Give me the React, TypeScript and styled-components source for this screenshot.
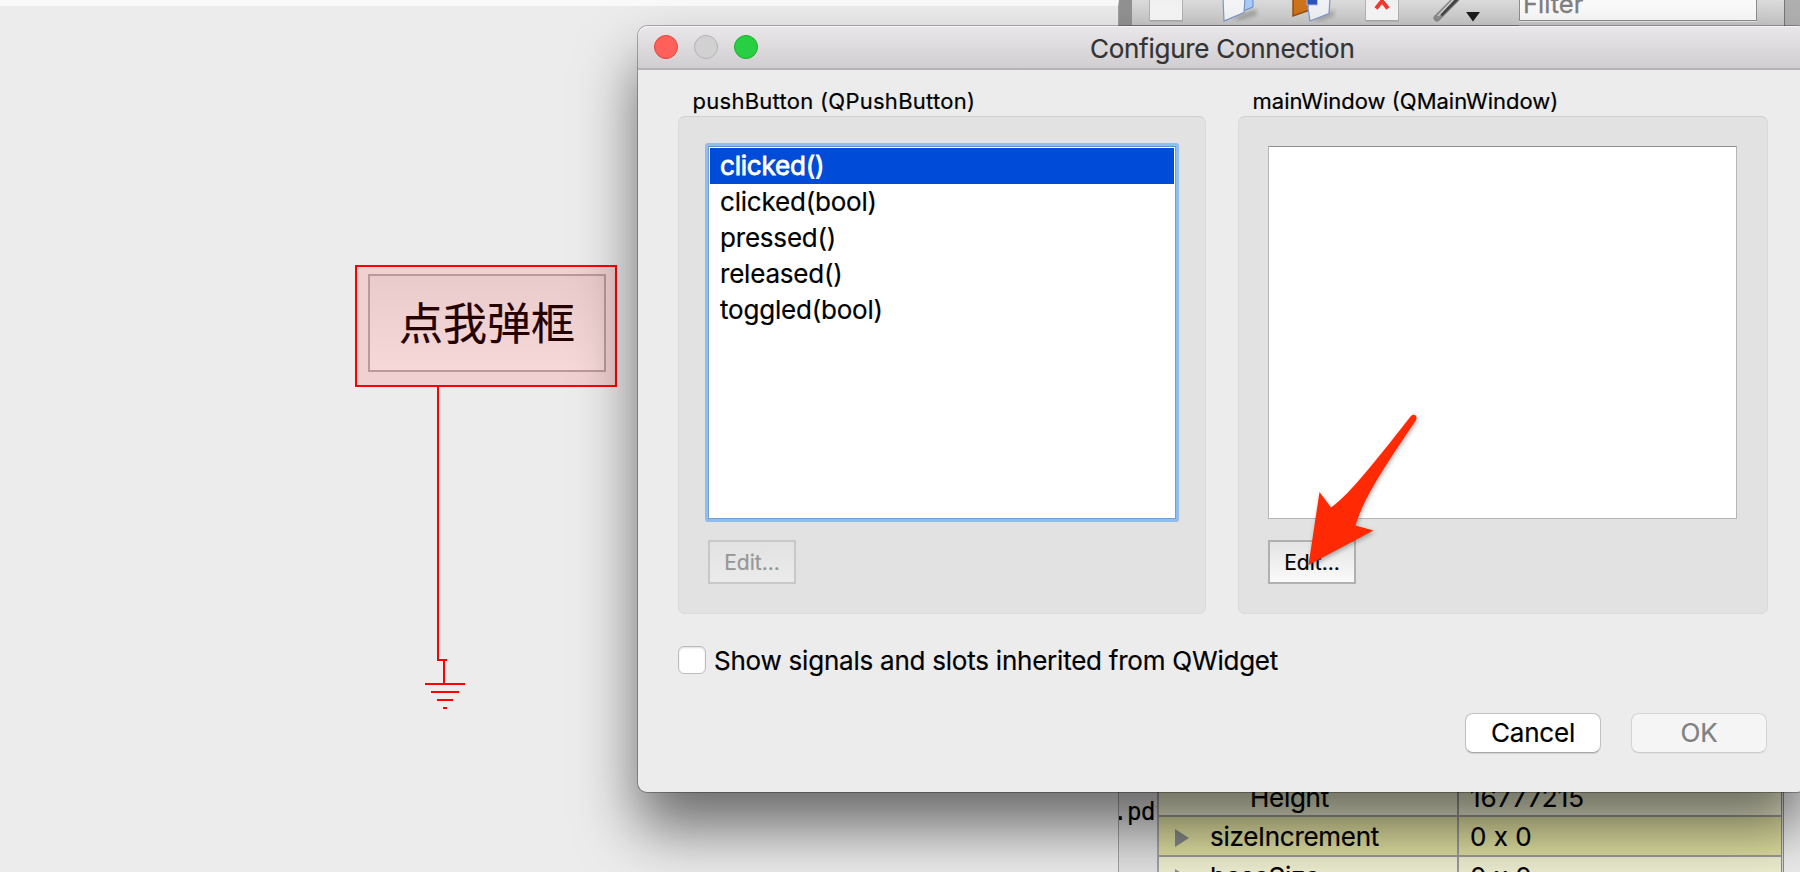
import React from 'react';
import styled, { createGlobalStyle } from 'styled-components';

const Global = createGlobalStyle`
  body { margin: 0; overflow: hidden; }
  * { box-sizing: border-box; }
`;

const Desktop = styled.div`
  position: relative;
  display: flex;
  width: 1800px;
  height: 872px;
  overflow: hidden;
  background: linear-gradient(#b0b0b0 40px, #ececec 700px);
  font-family: Inter, "Noto Sans CJK SC", sans-serif;
  color: #000;
  -webkit-text-stroke: 0.2px currentColor;
`;

const Canvas = styled.div`
  position: relative;
  width: 1119px;
  height: 872px;
  background: #ececec;
  border-top: 6px solid #fafafa;
  border-right: 1px solid #a0a0a0;
`;

const ConnectedButton = styled.div`
  position: absolute;
  left: 355px;
  top: 259px;
  width: 262px;
  height: 122px;
  padding: 7px 10px 12px 11px;
  border: 2px solid #ff0000;
  background: #f0d0d0;
`;

const PushButton = styled.div`
  display: flex;
  align-items: center;
  justify-content: center;
  width: 238px;
  height: 98px;
  padding-bottom: 5px;
  border: 2px solid #bc9a9a;
  background: linear-gradient(#eacbcb, #f6d8d8);
  font: 44px/64px "Noto Sans CJK SC", sans-serif;
  color: #240000;
`;

const Wire = styled.svg`
  position: absolute;
  left: 420px;
  top: 380px;
`;

const Behind = styled.div`
  display: flex;
  flex-direction: column;
  justify-content: space-between;
  width: 681px;
  height: 872px;
`;

const Toolbar = styled.div`
  display: flex;
  width: 666px;
  height: 30px;
  background: linear-gradient(#dcdcdc, #c8c8c8 24px);
  border-left: 13px solid #929292;
  border-right: 1px solid #777;
`;

const ToolIcons = styled.svg`
  flex: none;
  width: 387px;
  height: 30px;
`;

const Filter = styled.div`
  width: 238px;
  height: 21px;
  padding-left: 3px;
  overflow: hidden;
  border: 1px solid #8e8e8e;
  border-top: 0;
  background: #fbfbfb;
  box-shadow: 0 1px #e6e6e6;
  color: #808080;
  font-size: 25.5px;
  line-height: 7px;
  -webkit-text-stroke: 0.3px #808080;
`;

const Properties = styled.div`
  display: flex;
  height: 94px;
`;

const FileName = styled.div`
  width: 40px;
  padding-top: 16px;
  overflow: hidden;
  border-right: 2px solid #a2a2a2;
  background: #e2e2e2;
  font: 24px/36px "DejaVu Sans Mono", monospace;
  letter-spacing: -0.5px;
  text-indent: -6px;
`;

const Table = styled.div`
  width: 625px;
  border-right: 3px double #8c8c8c;
  background: #d8d8d8;
`;

const Row = styled.div<{ $bg: string; $h: number }>`
  display: flex;
  height: ${p => p.$h}px;
  overflow: hidden;
  background: ${p => p.$bg};
  border-bottom: 2px solid #9a9a9a;
  font-size: 26px;
  line-height: 40px;
`;

const Key = styled.div<{ $indent: number }>`
  position: relative;
  flex: none;
  width: 300px;
  padding-left: ${p => p.$indent}px;
  border-right: 2px solid #9a9a9a;
  letter-spacing: -0.28px;
`;

const Value = styled.div`
  padding-left: 11px;
`;

const Expander = styled.svg`
  position: absolute;
  left: 16px;
  top: 11px;
`;

const Dialog = styled.div`
  position: absolute;
  left: 638px;
  top: 26px;
  width: 1168px;
  height: 766px;
  border-radius: 10px 10px 9px 9px;
  background: #ececec;
  box-shadow: 0 0 0 1px rgba(0, 0, 0, 0.28), 0 36px 60px rgba(0, 0, 0, 0.55);
`;

const TitleBar = styled.div`
  display: flex;
  align-items: center;
  height: 44px;
  padding-left: 16px;
  gap: 16px;
  border-radius: 10px 10px 0 0;
  border-bottom: 2px solid #b5b3b5;
  background: linear-gradient(#e9e7e9, #d1ced1);
  box-shadow: inset 0 1px #f6f6f6;
`;

const Light = styled.span<{ $fill: string; $edge: string }>`
  width: 24px;
  height: 24px;
  border: 1px solid ${p => p.$edge};
  border-radius: 50%;
  background: ${p => p.$fill};
`;

const Title = styled.span`
  margin-left: 316px;
  padding-top: 3px;
  color: #333;
  font-size: 26px;
  line-height: 40px;
  letter-spacing: -0.28px;
  white-space: nowrap;
`;

const Groups = styled.div`
  display: flex;
  gap: 32px;
  padding: 18px 0 0 40px;
`;

const Group = styled.section<{ $w: number }>`
  width: ${p => p.$w}px;
`;

const GroupTitle = styled.h2<{ $track: number }>`
  height: 28px;
  margin: 0;
  padding-left: 14.5px;
  font-size: 22px;
  font-weight: 400;
  line-height: 26px;
  letter-spacing: ${p => p.$track}px;
  white-space: nowrap;
`;

const GroupBox = styled.div`
  height: 498px;
  padding: 29px 0 0 29px;
  border: 1px solid #dadada;
  border-top-color: #d0d0d0;
  border-radius: 7px;
  background: #e2e2e2;
`;

const List = styled.div<{ $focus?: boolean }>`
  width: ${p => (p.$focus ? 468 : 469)}px;
  height: 373px;
  padding: ${p => (p.$focus ? 1 : 0)}px;
  border: 1px solid ${p => (p.$focus ? '#6fa0d6' : '#b6b6b6')};
  border-top-color: ${p => (p.$focus ? '#5d8fc8' : '#8f8f8f')};
  background: #fff;
  box-shadow: ${p => (p.$focus ? '0 0 0 3px #8fbdf0' : 'none')};
  border-radius: ${p => (p.$focus ? 1 : 0)}px;
`;

const Item = styled.div<{ $selected?: boolean }>`
  height: 36px;
  padding-left: 10px;
  background: ${p => (p.$selected ? '#004cd8' : 'transparent')};
  color: ${p => (p.$selected ? '#fff' : '#000')};
  -webkit-text-stroke: ${p => (p.$selected ? '0.8px #fff' : '0.2px #000')};
  font-size: 26px;
  line-height: 36px;
  letter-spacing: -0.2px;
  white-space: nowrap;
`;

const EditButton = styled.div<{ $off?: boolean }>`
  display: flex;
  align-items: center;
  justify-content: center;
  width: 88px;
  height: 44px;
  margin-top: 21px;
  border: 2px solid ${p => (p.$off ? '#c8c8c8' : '#b0b0b0')};
  background: ${p => (p.$off ? 'linear-gradient(#e2e2e2, #ebebeb)' : 'linear-gradient(#e4e4e4, #fafafa)')};
  color: ${p => (p.$off ? '#969696' : '#000')};
  -webkit-text-stroke-color: ${p => (p.$off ? '#969696' : '#000')};
  font-size: 21px;
`;

const CheckRow = styled.label`
  display: flex;
  align-items: center;
  gap: 8px;
  height: 36px;
  margin: 28px 0 0 40px;
  font-size: 26px;
  letter-spacing: -0.23px;
  white-space: nowrap;
`;

const CheckBox = styled.span`
  width: 28px;
  height: 28px;
  border: 1px solid #bcbcbc;
  border-radius: 6px;
  background: #fff;
  box-shadow: inset 0 1px 2px #ddd;
`;

const Actions = styled.div`
  display: flex;
  gap: 30px;
  padding: 35px 0 0 827px;
`;

const Action = styled.div<{ $off?: boolean }>`
  display: flex;
  align-items: center;
  justify-content: center;
  width: 136px;
  height: 40px;
  padding-bottom: 1px;
  border: 1px solid ${p => (p.$off ? '#d5d5d5' : '#c2c2c2')};
  border-bottom-color: ${p => (p.$off ? '#cbcbcb' : '#a8a8a8')};
  border-radius: 8px;
  background: ${p => (p.$off ? '#f5f5f5' : '#fff')};
  color: ${p => (p.$off ? '#808080' : '#000')};
  -webkit-text-stroke-color: ${p => (p.$off ? '#808080' : '#000')};
  box-shadow: 0 1px 1px rgba(0, 0, 0, ${p => (p.$off ? 0.04 : 0.12)});
  font-size: 26px;
  letter-spacing: -0.2px;
`;

const Pointer = styled.svg`
  position: absolute;
  left: 1300px;
  top: 408px;
  filter: drop-shadow(1px 2px 2px rgba(0, 0, 0, 0.3));
`;

const signals = ['clicked()', 'clicked(bool)', 'pressed()', 'released()', 'toggled(bool)'];

const Arrow = () => (
  <Expander width="16" height="20" viewBox="0 0 16 20">
    <path d="M0 1 14 10 0 19Z" fill="#8a8a8e" />
  </Expander>
);

export default function App() {
  return (
    <Desktop>
      <Global />
      <Canvas>
        <ConnectedButton>
          <PushButton>点我弹框</PushButton>
        </ConnectedButton>
        <Wire width="50" height="330" fill="none" stroke="#f00" strokeWidth="2">
          <path d="M18 1V274M17 274H27M24 275V298M5 298H45M11 306H39M17 314H33M23 322H27" />
        </Wire>
      </Canvas>
      <Behind>
        <Toolbar>
          <ToolIcons viewBox="1132 0 387 30">
            <defs>
              <linearGradient id="sheet" x1="0" y1="0" x2="0" y2="1">
                <stop offset="0" stopColor="#f0f0f0" />
                <stop offset="1" stopColor="#fbfbfb" />
              </linearGradient>
              <filter id="soft"><feGaussianBlur stdDeviation="2" /></filter>
            </defs>
            <path d="M1149.500-3H1182.500V20.500H1149.500Z" fill="url(#sheet)" stroke="#b4b4b4" />
            <path d="M1150 21H1183" stroke="#a4a4a4" />
            <path d="M1232 18 1256 9 1257 15 1240 20Z" fill="#777" opacity=".55" filter="url(#soft)" />
            <path d="M1243-2H1253V7L1243 11Z" fill="#a9ccfa" stroke="#6489c8" />
            <path d="M1223-2H1245L1244 12.500 1224 21Z" fill="#f5f6f8" stroke="#7c98c8" strokeWidth="1.200" />
            <path d="M1312 19 1334 10 1334 16 1320 21Z" fill="#777" opacity=".5" filter="url(#soft)" />
            <path d="M1293-2H1310V10L1293 16Z" fill="#cf741c" stroke="#98500c" strokeWidth="1.500" />
            <path d="M1310-2H1330L1329 13.500 1310 21 1308 8Z" fill="#f1f3f7" stroke="#7c98c8" strokeWidth="1.200" />
            <path d="M1307-2H1317.500V5H1307Z" fill="#2e55bd" stroke="#a9c4ef" />
            <path d="M1365.500-3H1398.500V20.500H1365.500Z" fill="url(#sheet)" stroke="#b4b4b4" />
            <path d="M1366 21H1399" stroke="#a4a4a4" />
            <path d="M1376 8.500 1382 1 1388 8.500M1382 2V-4" stroke="#f23a30" strokeWidth="4" fill="none" />
            <path d="M1456-1 1437 18" stroke="#8c8c8c" strokeWidth="7" strokeLinecap="round" />
            <path d="M1457-1 1441 15" stroke="#444" strokeWidth="3.500" />
            <path d="M1455-2 1438 16" stroke="#d2d2d2" strokeWidth="1.500" />
            <path d="M1466 12H1480L1473 21.500Z" fill="#1c1c1c" />
            <path d="M1132 25.500H1519" stroke="#999" />
          </ToolIcons>
          <Filter>Filter</Filter>
        </Toolbar>
        <Properties>
          <FileName>.pdf</FileName>
          <Table>
            <Row $bg="#eeeed0" $h={39}><Key $indent={91}>Height</Key><Value>16777215</Value></Row>
            <Row $bg="#e0e0a2" $h={40}><Key $indent={51}><Arrow />sizeIncrement</Key><Value>0 x 0</Value></Row>
            <Row $bg="#eeeed0" $h={40}><Key $indent={51}><Arrow />baseSize</Key><Value>0 x 0</Value></Row>
          </Table>
        </Properties>
      </Behind>
      <Dialog>
        <TitleBar>
          <Light $fill="#ff6059" $edge="#e2463f" />
          <Light $fill="#d2d1d2" $edge="#b4b2b4" />
          <Light $fill="#29cf42" $edge="#1dad2b" />
          <Title>Configure Connection</Title>
        </TitleBar>
        <Groups>
          <Group $w={528}>
            <GroupTitle $track={0.27}>pushButton (QPushButton)</GroupTitle>
            <GroupBox>
              <List $focus>
                {signals.map((s, i) => <Item key={s} $selected={i === 0}>{s}</Item>)}
              </List>
              <EditButton $off>Edit...</EditButton>
            </GroupBox>
          </Group>
          <Group $w={530}>
            <GroupTitle $track={0}>mainWindow (QMainWindow)</GroupTitle>
            <GroupBox>
              <List />
              <EditButton>Edit...</EditButton>
            </GroupBox>
          </Group>
        </Groups>
        <CheckRow><CheckBox />Show signals and slots inherited from QWidget</CheckRow>
        <Actions>
          <Action>Cancel</Action>
          <Action $off>OK</Action>
        </Actions>
      </Dialog>
      <Pointer width="130" height="170" viewBox="1300 408 130 170">
        <path d="M1411 416 C1414 413 1418 416 1416 420 C1395 452 1365 493 1355.500 525.500 L1373.500 530.500 L1308.500 565 L1319.500 492 L1331 507.500 C1350 495 1384 450 1411 416Z" fill="#ff2a04" />
      </Pointer>
    </Desktop>
  );
}
